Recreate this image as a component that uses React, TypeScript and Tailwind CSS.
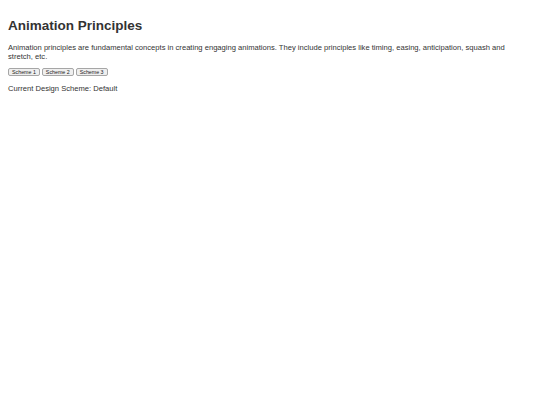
export default function App() {
  const schemes = ["Scheme 1", "Scheme 2", "Scheme 3"];

  return (
    <div className="min-h-screen bg-white px-2 pt-[18px] text-[#333] font-['Liberation_Sans',Arial,sans-serif]">
      <h1 className="text-[13.5px] font-bold leading-[16px] mb-[9px]">Animation Principles</h1>

      <p className="text-[7.6px] leading-[9px] mb-[7px] pr-3">
        Animation principles are fundamental concepts in creating engaging animations. They include principles
        like timing, easing, anticipation, squash and stretch, etc.
      </p>

      <div className="flex gap-[2px] mb-[8px]">
        {schemes.map((s) => (
          <button
            key={s}
            className="text-[5.3px] leading-[6px] px-[3px] py-0 bg-[#efefef] border border-[#a6a6a6] rounded-[2px] text-[#222]"
          >
            {s}
          </button>
        ))}
      </div>

      <p className="text-[7.6px] leading-[9px]">Current Design Scheme: Default</p>
    </div>
  );
}
